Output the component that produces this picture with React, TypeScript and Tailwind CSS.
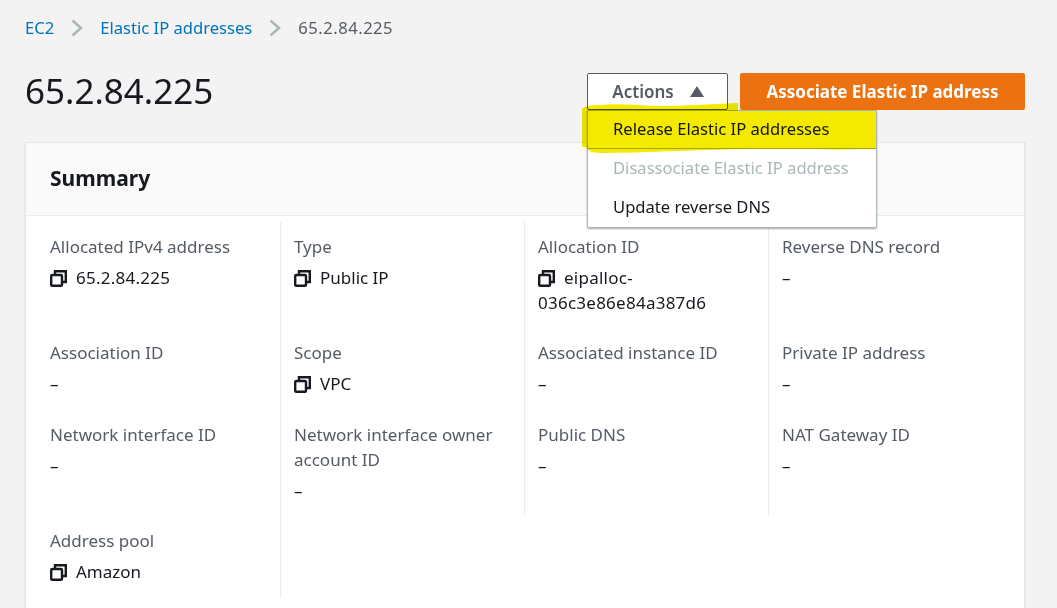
const cols = [
  [
    { label: 'Allocated IPv4 address', value: '65.2.84.225', copy: true, digits: true, h: 'h-[106px]' },
    { label: 'Association ID', value: '–', h: 'h-[82px]' },
    { label: 'Network interface ID', value: '–', h: 'h-[106px]' },
    { label: 'Address pool', value: 'Amazon', copy: true, h: 'h-[70px]' },
  ],
  [
    { label: 'Type', value: 'Public IP', copy: true, h: 'h-[106px]' },
    { label: 'Scope', value: 'VPC', copy: true, h: 'h-[82px]' },
    { label: 'Network interface owner account ID', value: '–', h: 'h-[94px]' },
  ],
  [
    { label: 'Allocation ID', value: 'eipalloc-036c3e86e84a387d6', copy: true, digits: true, h: 'h-[106px]' },
    { label: 'Associated instance ID', value: '–', h: 'h-[82px]' },
    { label: 'Public DNS', value: '–', h: 'h-[94px]' },
  ],
  [
    { label: 'Reverse DNS record', value: '–', h: 'h-[106px]' },
    { label: 'Private IP address', value: '–', h: 'h-[82px]' },
    { label: 'NAT Gateway ID', value: '–', h: 'h-[94px]' },
  ],
];

const colClass = [
  'pl-[24px] pr-[12px] border-r border-[#eaeded]',
  'pl-[13px] pr-[12px] border-r border-[#eaeded]',
  'pl-[13px] pr-[50px] border-r border-[#eaeded]',
  'pl-[13px] pr-[12px]',
];

const CopyIcon = () => (
  <svg width="17" height="17" viewBox="0 0 17 17" fill="none" stroke="#16191f" strokeWidth="2.4" className="inline-block align-[-3px] mr-[9px]">
    <rect x="1.2" y="5" width="10.8" height="10.8" rx="1" />
    <path d="M5 4V1.2h10.8V12H13" />
  </svg>
);

const Chevron = () => (
  <svg width="12" height="18" viewBox="0 0 12 18" fill="none" stroke="#aab7b8" strokeWidth="2.5">
    <path d="M1.5 1.5 10 9l-8.5 7.5" />
  </svg>
);

const Field = ({ label, value, copy, digits, h }: { label: string; value: string; copy?: boolean; digits?: boolean; h: string }) => (
  <div className={h}>
    <div className="text-[#545b64] leading-[25px]">{label}</div>
    <div className={`mt-[6px] text-[#16191f] leading-[25px] ${digits ? 'tracking-[0.25px]' : ''}`}>
      {copy && <CopyIcon />}
      {value}
    </div>
  </div>
);

const ActionsMenu = () => (
  <div className="absolute left-0 top-[37px] w-[290px] bg-white border border-[#aab7b8] rounded-b-[2px] shadow-[0_1px_2px_rgba(0,0,0,0.35)] text-[16.6px] text-[#16191f] z-20">
    <div className="h-[38px] pl-[25px] flex items-center border-b border-[#aab7b8]">Release Elastic IP addresses</div>
    <div className="h-[38px] pl-[25px] flex items-center text-[#aab7b8]">Disassociate Elastic IP address</div>
    <div className="h-[40px] pl-[25px] flex items-center">Update reverse DNS</div>
  </div>
);

// the hand-drawn marker stroke over the first menu item
const Highlight = () => (
  <svg className="absolute left-[-6px] top-[30px] z-30 mix-blend-multiply pointer-events-none" width="300" height="52" viewBox="0 0 300 52">
    <path d="M1 6C4 3 9 2 20 2C40 0 60 3 80 3C100 3 130 1 157 0V8H295V46C260 47 230 46 180 46C130 46 60 50 20 50C10 50 6 47 5 44L1 44Z" fill="#f4ea00" />
  </svg>
);

export default function App() {
  return (
    <div className="w-[1057px] h-[608px] overflow-hidden bg-[#f3f3f3] pl-[25px] pr-[32px] text-[17px] font-['Noto_Sans',sans-serif]">
      <nav className="flex items-center h-[56px] text-[16.6px] text-[#545b64]">
        <span className="text-[#0073bb]">EC2</span>
        <span className="mx-[17px] flex"><Chevron /></span>
        <span className="text-[#0073bb]">Elastic IP addresses</span>
        <span className="mx-[17px] flex"><Chevron /></span>
        <span className="tracking-[0.5px]">65.2.84.225</span>
      </nav>

      <div className="flex items-center justify-between h-[86px] pb-[16px] pt-[1px]">
        <h1 className="text-[35px] text-[#16191f]">65.2.84.225</h1>
        <div className="flex gap-[12px]">
          <div className="relative">
            <button className="w-[141px] h-[37px] bg-white border border-[#545b64] rounded-[2px] font-semibold text-[#545b64] flex items-center justify-center gap-[16px] pl-[1px]">
              Actions
              <svg width="14" height="11" viewBox="0 0 14 11"><path d="M7 0l7 11H0z" fill="#545b64" /></svg>
            </button>
            <ActionsMenu />
            <Highlight />
          </div>
          <button className="w-[285px] h-[37px] bg-[#ec7211] rounded-[2px] font-bold text-white">Associate Elastic IP address</button>
        </div>
      </div>

      <section className="w-[1000px] h-[500px] bg-white border border-[#e4e6e6] shadow-[0_1px_1px_rgba(0,0,0,0.2)]">
        <header className="h-[73px] bg-[#fafafa] border-b border-[#eaeded] pl-[24px] flex items-center">
          <h2 className="text-[21px] font-bold text-[#16191f]">Summary</h2>
        </header>
        <div className="grid grid-cols-[255px_244px_244px_1fr] items-start mt-[6px]">
          {cols.map((col, i) => (
            <div key={i} className={`pt-[12px] ${colClass[i]}`}>
              {col.map(f => <Field key={f.label} {...f} />)}
            </div>
          ))}
        </div>
      </section>
    </div>
  );
}
